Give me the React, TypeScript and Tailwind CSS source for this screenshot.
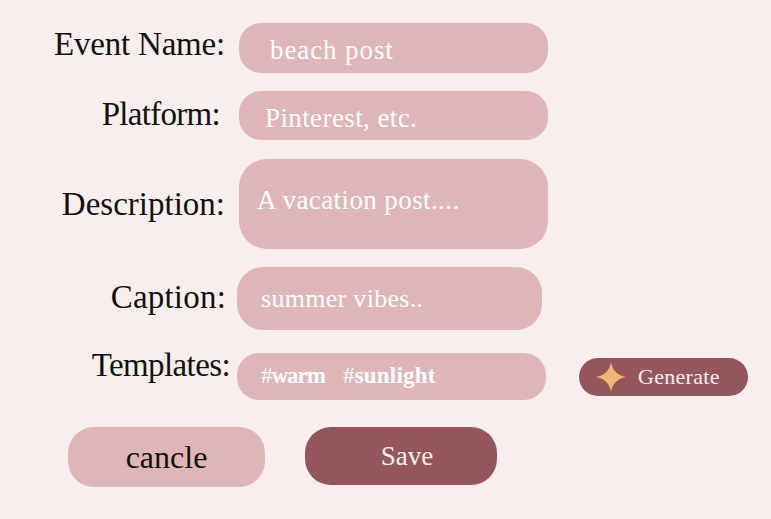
const font = "font-['Liberation_Serif',serif]";

function Field({
  label,
  labelClass,
  boxClass,
  children,
}: {
  label: string;
  labelClass: string;
  boxClass: string;
  children: React.ReactNode;
}) {
  return (
    <div className="flex items-center">
      <div className={`text-right text-[33px] leading-[40px] text-[#111] ${labelClass}`}>{label}</div>
      <div className={`flex bg-[#dfb6b7] text-white ${boxClass}`}>{children}</div>
    </div>
  );
}

function Sparkle() {
  return (
    <svg width="30" height="30" viewBox="0 0 30 30" className="shrink-0">
      <path d="M15 0 Q17 12.6 30 15 Q17 17.4 15 30 Q13 17.4 0 15 Q13 12.6 15 0 Z" fill="#edb971" />
    </svg>
  );
}

export default function App() {
  return (
    <div className={`h-[519px] w-[771px] overflow-hidden bg-[#f8eeed] pt-[23px] ${font}`}>
      <Field
        label="Event Name:"
        labelClass="w-[225px] mr-[14px] mb-[8px] tracking-[-0.2px]"
        boxClass="h-[50px] w-[309px] items-center rounded-[22px] pl-[31px] text-[27px]"
      >
        <span className="mt-[5px] tracking-[0.9px]">beach post</span>
      </Field>
      <div className="mt-[18px]">
        <Field
          label="Platform:"
          labelClass="w-[220px] mr-[19px] mb-[3px] tracking-[-0.7px]"
          boxClass="h-[49px] w-[309px] items-center rounded-[22px] pl-[26px] text-[27px]"
        >
          <span className="mt-[5px] tracking-[0.4px]">Pinterest, etc.</span>
        </Field>
      </div>
      <div className="mt-[19px]">
        <Field
          label="Description:"
          labelClass="w-[225px] mr-[14px]"
          boxClass="h-[90px] w-[309px] rounded-[28px] pl-[18px] pt-[23px] text-[27px] leading-[36px]"
        >
          <span className="tracking-[0.4px]">A vacation post....</span>
        </Field>
      </div>
      <div className="mt-[18px]">
        <Field
          label="Caption:"
          labelClass="w-[226px] mr-[11px] mb-[4px] tracking-[0.2px]"
          boxClass="h-[63px] w-[305px] items-center rounded-[26px] pl-[24px] text-[26px]"
        >
          <span className="tracking-[0.3px]">summer vibes..</span>
        </Field>
      </div>
      <div className="mt-[23px] flex items-center">
        <Field
          label="Templates:"
          labelClass="w-[230px] mr-[7px] -mt-[8px] mb-[15px] tracking-[-0.6px]"
          boxClass="h-[47px] w-[309px] items-center gap-[18px] rounded-[22px] pl-[24px] text-[23px] font-bold"
        >
          <span className="tracking-[-1px]">
            <span className="font-normal">#</span>warm
          </span>
          <span className="tracking-[0.2px]">
            <span className="font-normal">#</span>sunlight
          </span>
        </Field>
        <button className="ml-[33px] flex h-[38px] w-[169px] items-center gap-[12px] rounded-[19px] bg-[#95565b] pl-[17px] text-[22px] tracking-[0.3px] text-[#fbf0ee]">
          <Sparkle />
          <span>Generate</span>
        </button>
      </div>
      <div className="mt-[27px] flex items-start pl-[68px]">
        <button className="h-[60px] w-[197px] rounded-[26px] bg-[#dfb6b7] text-[32px] text-[#111]">cancle</button>
        <button className="ml-[40px] h-[58px] w-[192px] rounded-[26px] bg-[#95565b] pl-[12px] text-[27px] text-[#fbf0ee]">Save</button>
      </div>
    </div>
  );
}
